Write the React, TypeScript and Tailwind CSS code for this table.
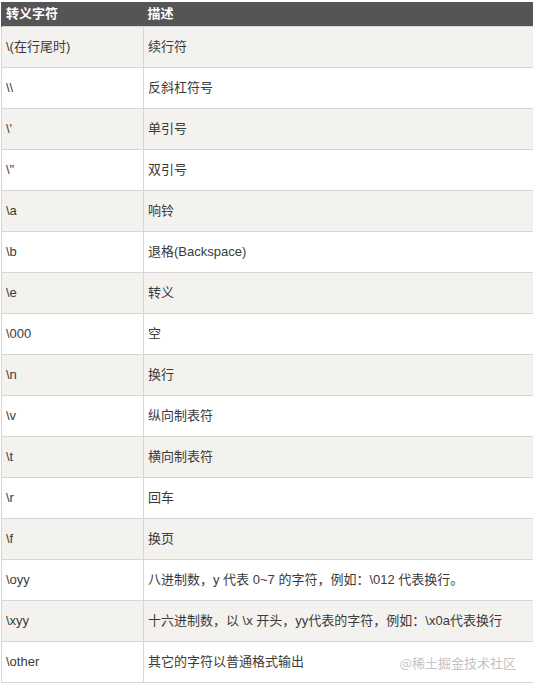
const rows: [string, string][] = [
  ["\\(在行尾时)", "续行符"],
  ["\\\\", "反斜杠符号"],
  ["\\'", "单引号"],
  ['\\"', "双引号"],
  ["\\a", "响铃"],
  ["\\b", "退格(Backspace)"],
  ["\\e", "转义"],
  ["\\000", "空"],
  ["\\n", "换行"],
  ["\\v", "纵向制表符"],
  ["\\t", "横向制表符"],
  ["\\r", "回车"],
  ["\\f", "换页"],
  ["\\oyy", "八进制数，y 代表 0~7 的字符，例如：\\012 代表换行。"],
  ["\\xyy", "十六进制数，以 \\x 开头，yy代表的字符，例如：\\x0a代表换行"],
  ["\\other", "其它的字符以普通格式输出"],
];

export default function App() {
  return (
    <div className="relative w-[533px] h-[684px] overflow-hidden bg-white pt-[2px] pl-[1px] font-['Liberation_Sans','Noto_Sans_CJK_SC',sans-serif] text-[13px] text-[#3a3a3a]">
      <table className="w-[560px] border-collapse table-fixed">
        <colgroup>
          <col className="w-[142px]" />
          <col />
        </colgroup>
        <thead>
          <tr className="h-[24px] bg-[#555555] text-white font-bold text-left">
            <th className="pl-[4px] border-l border-[#555555]">转义字符</th>
            <th className="pl-[4px]">描述</th>
          </tr>
        </thead>
        <tbody>
          {rows.map(([k, v], i) => (
            <tr key={k} className={i % 2 === 0 ? "h-[41px] bg-[#f3f2ef]" : "h-[41px] bg-white"}>
              <td className="border border-[#d6d6d6] pl-[4px] whitespace-nowrap">{k}</td>
              <td className="border border-[#d6d6d6] pl-[4px] whitespace-nowrap">{v}</td>
            </tr>
          ))}
        </tbody>
      </table>
      <div className="absolute right-[17px] top-[653px] text-[13px] text-[#c4c4c4] font-['Noto_Sans_CJK_SC',sans-serif]">
        @稀土掘金技术社区
      </div>
    </div>
  );
}
